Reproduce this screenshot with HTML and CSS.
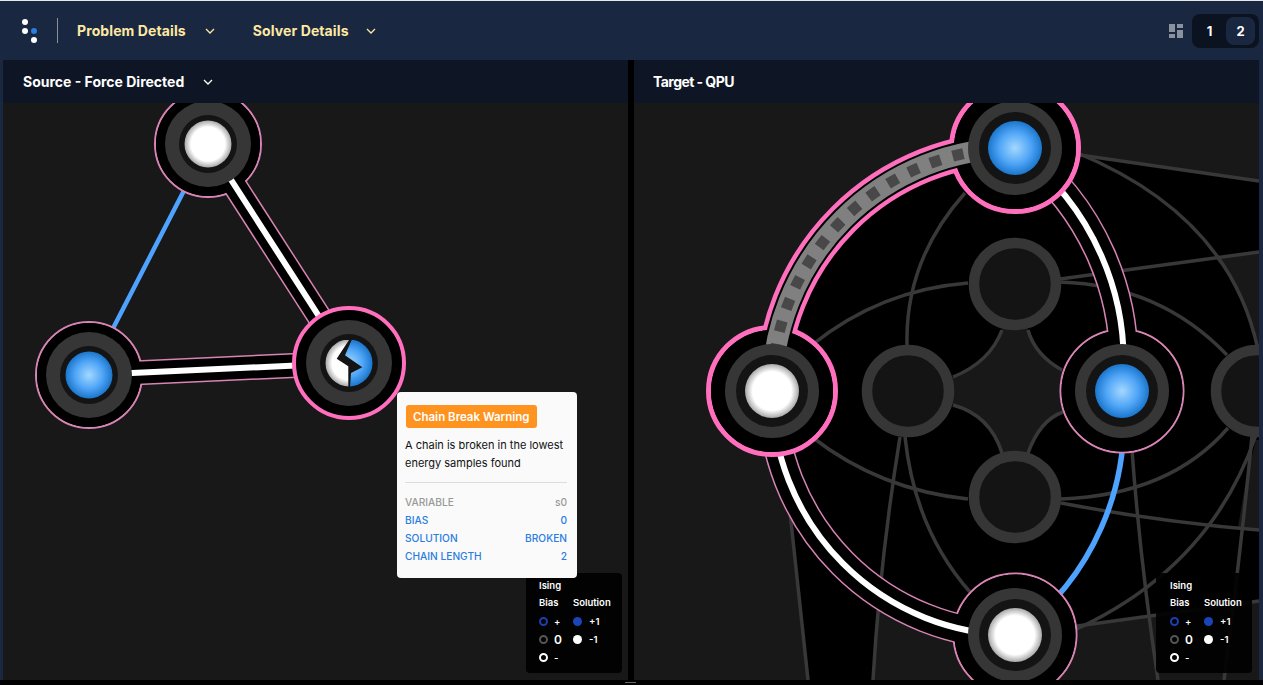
FILE: index.html
```html
<!DOCTYPE html>
<html lang="en">
  <head>
    <meta charset="UTF-8" />
    <meta name="viewport" content="width=device-width, initial-scale=1.0" />
    <title>Problem Inspector</title>
    <link rel="stylesheet" href="styles.css">
  </head>
  <body>
    <header class="topbar">
      <svg class="logo" width="24" height="30" viewBox="0 0 24 30">
        <circle cx="5" cy="6" r="3" fill="#fff" />
        <circle cx="5" cy="15" r="3" fill="#fff" />
        <circle cx="14" cy="15" r="3" fill="#2a7de1" />
        <circle cx="14" cy="24" r="3" fill="#fff" />
      </svg>
      <div class="topbar-sep"></div>
      <div class="menu-item menu-problem">
        <span>Problem Details</span>
        <svg class="chevron" width="10" height="6" viewBox="0 0 10 6"><path d="M1 1l4 4 4-4" /></svg>
      </div>
      <div class="menu-item">
        <span>Solver Details</span>
        <svg class="chevron" width="10" height="6" viewBox="0 0 10 6"><path d="M1 1l4 4 4-4" /></svg>
      </div>
      <svg class="layout-icon" width="14" height="14" viewBox="0 0 14 14">
        <rect x="0" y="0" width="6" height="8" />
        <rect x="8" y="0" width="6" height="4" />
        <rect x="0" y="10" width="6" height="4" />
        <rect x="8" y="6" width="6" height="8" />
      </svg>
      <div class="pager">
        <div class="pager-btn">1</div>
        <div class="pager-btn active">2</div>
      </div>
    </header>

    <main class="panels">
      <section class="panel panel-source">
        <div class="panel-head">
          <span>Source - Force Directed</span>
          <svg class="chevron" width="10" height="6" viewBox="0 0 10 6"><path d="M1 1l4 4 4-4" /></svg>
        </div>
        <div class="canvas">
          <svg class="graph" width="625" height="577" viewBox="3 103 625 577">
            <defs>
              <radialGradient id="blueA"><stop offset="0" stop-color="#a3d8ff" /><stop offset="0.6" stop-color="#4ea4f6" /><stop offset="1" stop-color="#1a76cc" /></radialGradient>
              <radialGradient id="whiteA"><stop offset="0" stop-color="#fff" /><stop offset="0.72" stop-color="#fff" /><stop offset="1" stop-color="#a8a8a8" /></radialGradient>
              <clipPath id="halfWhite"><path d="M349 340 L336.7 358.7 L348.3 366.3 L348.3 388 L320 388 L320 340 Z" /></clipPath>
              <clipPath id="halfBlue"><path d="M351.7 340 L345 355.3 L362.3 367.3 L351 373 L350 388 L380 388 L380 340 Z" /></clipPath>
            </defs>
            <path class="edge-blue edge-w4" d="M208 144 L89 375" />
            <path class="halo-pink halo-w25" d="M208 144 L349 363 M89 375 L349 363" />
            <circle class="ring-thin" cx="208" cy="144" r="53" />
            <circle class="ring-thin" cx="89" cy="375" r="53" />
            <path class="halo-black halo-w22" d="M208 144 L349 363 M89 375 L349 363" />
            <circle class="halo-disc" cx="208" cy="144" r="52" />
            <circle class="halo-disc" cx="89" cy="375" r="52" />
            <path class="edge-white edge-w6" d="M208 144 L349 363 M89 375 L349 363" />
            <circle class="ring-thick" cx="349" cy="363" r="55" />

            <circle class="node-ring" cx="208" cy="144" r="43" />
            <circle class="node-core" cx="208" cy="144" r="29" />
            <circle cx="208" cy="144" r="23.5" fill="url(#whiteA)" />

            <circle class="node-ring" cx="89" cy="375" r="43" />
            <circle class="node-core" cx="89" cy="375" r="29" />
            <circle cx="89" cy="375" r="23.5" fill="url(#blueA)" />

            <circle class="node-ring" cx="349" cy="363" r="43" />
            <circle class="node-core" cx="349" cy="363" r="29" />
            <circle cx="349" cy="363" r="23.5" fill="url(#whiteA)" clip-path="url(#halfWhite)" />
            <circle cx="349" cy="363" r="23.5" fill="url(#blueA)" clip-path="url(#halfBlue)" />
          </svg>
          <div class="legend legend-source">
            <div class="legend-title">Ising</div>
            <div class="legend-cols">
              <div class="legend-col">
                <div class="legend-head">Bias</div>
                <div class="legend-row"><i class="dot ring-blue"></i><b>+</b></div>
                <div class="legend-row"><i class="dot ring-gray"></i><b class="big">0</b></div>
                <div class="legend-row"><i class="dot ring-white"></i><b>-</b></div>
              </div>
              <div class="legend-col">
                <div class="legend-head">Solution</div>
                <div class="legend-row"><i class="dot fill-blue"></i><b>+1</b></div>
                <div class="legend-row"><i class="dot fill-white"></i><b>-1</b></div>
              </div>
            </div>
          </div>
        </div>
      </section>

      <section class="panel panel-target">
        <div class="panel-head"><span class="head-tight">Target - QPU</span></div>
        <div class="canvas">
          <svg class="graph" width="625" height="577" viewBox="634 103 625 577">
            <defs>
              <radialGradient id="blueB"><stop offset="0" stop-color="#a3d8ff" /><stop offset="0.6" stop-color="#4ea4f6" /><stop offset="1" stop-color="#1a76cc" /></radialGradient>
              <radialGradient id="whiteB"><stop offset="0" stop-color="#fff" /><stop offset="0.72" stop-color="#fff" /><stop offset="1" stop-color="#a8a8a8" /></radialGradient>
            </defs>
            <!-- black fill the arcs enclose -->
            <path class="area-black" d="M772 391 A243 243 0 0 1 1015 148 L1080 155 L1259 181 L1259 602 L1077 625 L1015 635 A243 243 0 0 1 880 593 L873 680 L808 680 L786 475 Z" />
            <path class="area-gray" d="M1015 284 L1002 330 Q990 362 953 377 L908 391 L953 405 Q990 415 1002 453 L1015 497 L1028 453 Q1040 420 1063 412 L1122 391 L1062 370 Q1035 355 1028 330 Z" />
            <path class="area-gray" d="M1215 258 Q1248 295 1258 350 L1259 350 L1259 252 Z" />
            <path class="area-gray" d="M1246 480 L1256 440 L1259 440 L1259 530 L1238 527 Z" />

            <path class="line" d="M1060 155 L1080 155 L1259 181" />
            <path class="line" d="M1075 152 Q1230 215 1258 350" />
            <path class="line" d="M1060 279 L1259 252" />
            <path class="line" d="M1060 282 Q1160 285 1227 355" />
            <path class="line" d="M1028 330 Q1035 355 1062 370" />
            <path class="line" d="M1002 330 Q990 362 953 377" />
            <path class="line" d="M953 405 Q990 415 1002 453" />
            <path class="line" d="M1028 453 Q1040 420 1063 412" />
            <path class="line" d="M965 193 Q905 260 907 345" />
            <path class="line" d="M812 345 Q880 290 968 283" />
            <path class="line" d="M812 437 Q880 490 968 499" />
            <path class="line" d="M900 437 Q880 560 873 680" />
            <path class="line" d="M905 437 Q915 530 970 592" />
            <path class="line" d="M786 475 Q792 530 808 680" />
            <path class="line" d="M1061 499 Q1170 495 1228 428" />
            <path class="line" d="M1061 503 Q1160 522 1259 530" />
            <path class="line" d="M1132 450 Q1140 560 1158 680" />
            <path class="line" d="M1252 436 Q1240 560 1224 680" />
            <path class="line" d="M1070 632 Q1210 570 1256 435" />
            <path class="line" d="M1070 627 L1259 601" />

            <path class="edge-blue edge-w5" d="M1122 391 A265 265 0 0 1 1015 635" />

            <!-- thin chains run under the two selected nodes -->
            <path class="halo-pink halo-w30" d="M1015 148 A265 265 0 0 1 1122 391 M772 391 A243 243 0 0 0 1015 635" />
            <circle class="ring-thin" cx="1122" cy="391" r="61.5" />
            <circle class="ring-thin" cx="1015" cy="635" r="61.5" />
            <path class="halo-black halo-w27" d="M1015 148 A265 265 0 0 1 1122 391 M772 391 A243 243 0 0 0 1015 635" />
            <circle class="halo-disc" cx="1122" cy="391" r="60.5" />
            <circle class="halo-disc" cx="1015" cy="635" r="60.5" />
            <path class="edge-white edge-w6" d="M1015 148 A265 265 0 0 1 1122 391 M772 391 A243 243 0 0 0 1015 635" />

            <!-- selected chain -->
            <path class="halo-hot halo-w34" d="M772 391 A243 243 0 0 1 1015 148" />
            <circle class="ring-hot" cx="772" cy="391" r="63.5" />
            <circle class="ring-hot" cx="1015" cy="148" r="63.5" />
            <path class="halo-black halo-w25" d="M772 391 A243 243 0 0 1 1015 148" />
            <circle class="halo-disc" cx="772" cy="391" r="61" />
            <circle class="halo-disc" cx="1015" cy="148" r="61" />
            <path class="edge-broken" d="M772 391 A243 243 0 0 1 1015 148" />
            <path class="edge-dashes" d="M772 391 A243 243 0 0 1 1015 148" />

            <circle class="node-ring" cx="1015" cy="148" r="47" />
            <circle class="node-core" cx="1015" cy="148" r="36" />
            <circle cx="1015" cy="148" r="27" fill="url(#blueB)" />

            <circle class="node-ring" cx="772" cy="391" r="47" />
            <circle class="node-core" cx="772" cy="391" r="36" />
            <circle cx="772" cy="391" r="27" fill="url(#whiteB)" />

            <circle class="node-ring" cx="1122" cy="391" r="47" />
            <circle class="node-core" cx="1122" cy="391" r="36" />
            <circle cx="1122" cy="391" r="27" fill="url(#blueB)" />

            <circle class="node-ring" cx="1015" cy="635" r="47" />
            <circle class="node-core" cx="1015" cy="635" r="36" />
            <circle cx="1015" cy="635" r="27" fill="url(#whiteB)" />

            <circle class="node-empty" cx="1015" cy="284" r="41" />
            <circle class="node-empty" cx="908" cy="391" r="41" />
            <circle class="node-empty" cx="1015" cy="497" r="41" />
            <circle class="node-empty" cx="1257" cy="391" r="41" />
          </svg>
          <div class="legend legend-target">
            <div class="legend-title">Ising</div>
            <div class="legend-cols">
              <div class="legend-col">
                <div class="legend-head">Bias</div>
                <div class="legend-row"><i class="dot ring-blue"></i><b>+</b></div>
                <div class="legend-row"><i class="dot ring-gray"></i><b class="big">0</b></div>
                <div class="legend-row"><i class="dot ring-white"></i><b>-</b></div>
              </div>
              <div class="legend-col">
                <div class="legend-head">Solution</div>
                <div class="legend-row"><i class="dot fill-blue"></i><b>+1</b></div>
                <div class="legend-row"><i class="dot fill-white"></i><b>-1</b></div>
              </div>
            </div>
          </div>
        </div>
      </section>

      <div class="tooltip">
        <div class="badge">Chain Break Warning</div>
        <p class="tooltip-text">A chain is broken in the lowest energy samples found</p>
        <div class="tooltip-rows">
          <div class="tooltip-row muted"><span>VARIABLE</span><span>s0</span></div>
          <div class="tooltip-row"><span>BIAS</span><span>0</span></div>
          <div class="tooltip-row"><span>SOLUTION</span><span>BROKEN</span></div>
          <div class="tooltip-row"><span>CHAIN LENGTH</span><span>2</span></div>
        </div>
      </div>
    </main>
    <div class="bottom-bar"><div class="handle"></div></div>
  </body>
</html>
```

FILE: styles.css
```css
html, body {
  margin: 0;
  height: 100%;
}

body {
  width: 1263px;
  height: 685px;
  overflow: hidden;
  background-color: #1a2740;
  font-family: Inter, "Liberation Sans", sans-serif;
  display: flex;
  flex-direction: column;
  border-top: 1px solid #e8e8e8;
  box-sizing: border-box;
}

/* top bar */
.topbar {
  height: 59px;
  flex: none;
  display: flex;
  align-items: center;
  padding: 0 4px 0 20px;
  box-sizing: border-box;
}

.logo {
  margin-right: 13px;
}

.topbar-sep {
  width: 1px;
  height: 25px;
  background-color: #8a8f99;
  margin-right: 19px;
}

.menu-item {
  display: flex;
  align-items: center;
  color: #fde9a4;
  font-size: 14px;
  font-weight: 700;
  letter-spacing: 0.1px;
  gap: 17px;
}

.menu-problem {
  gap: 19px;
  margin-right: 38px;
}

.chevron {
  fill: none;
  stroke: currentColor;
  stroke-width: 1.3;
}

.layout-icon {
  margin-left: auto;
  margin-right: 9px;
  fill: #8a92a0;
}

.pager {
  display: flex;
  align-items: center;
  justify-content: space-between;
  width: 67px;
  height: 34px;
  margin-top: 1px;
  padding: 3px 4px 3px 3px;
  box-sizing: border-box;
  background-color: #0b1220;
  border-radius: 8px;
}

.pager-btn {
  width: 29px;
  height: 28px;
  line-height: 28px;
  text-align: center;
  color: #fff;
  font-size: 13px;
  font-weight: 700;
  border-radius: 8px;
}

.pager-btn.active {
  background-color: #1a2740;
}

/* panels */
.panels {
  position: relative;
  display: flex;
  height: 620px;
  flex: none;
  padding: 0 4px 0 3px;
  box-sizing: border-box;
}

.panel {
  width: 625px;
  display: flex;
  flex-direction: column;
}

.panel-source {
  margin-right: 6px;
}

.panels::after {
  content: "";
  position: absolute;
  left: 628px;
  top: 0;
  bottom: 0;
  width: 6px;
  background-color: #000;
}

.panel-head {
  height: 43px;
  flex: none;
  display: flex;
  align-items: center;
  gap: 19px;
  padding: 0 20px;
  color: #fff;
  background-color: #0e1524;
  font-size: 14px;
  font-weight: 700;
}

.head-tight {
  margin-left: -1px;
  letter-spacing: -0.55px;
}

.canvas {
  position: relative;
  flex: 1;
  background-color: #181818;
  overflow: hidden;
}

.graph {
  display: block;
}

/* graph drawing */
.area-black { fill: #000; }
.area-gray { fill: #181818; }

.line {
  fill: none;
  stroke: #383838;
  stroke-width: 3.5;
}

.edge-blue, .edge-white, .halo-pink, .halo-hot, .halo-black, .edge-broken, .edge-dashes {
  fill: none;
}

.edge-blue { stroke: #4da3ff; }
.edge-white { stroke: #fff; }
.halo-pink { stroke: #d884b4; }
.halo-hot { stroke: #ff6fbe; }
.halo-black { stroke: #000; }

.edge-w4 { stroke-width: 4.5; }
.edge-w5 { stroke-width: 5.5; }
.edge-w6 { stroke-width: 6; }
.halo-w22 { stroke-width: 22; }
.halo-w25 { stroke-width: 25; }
.halo-w27 { stroke-width: 27; }
.halo-w30 { stroke-width: 30; }
.halo-w34 { stroke-width: 34; }

.edge-broken {
  stroke: #808080;
  stroke-width: 21;
}

.edge-dashes {
  stroke: #484848;
  stroke-width: 11;
  stroke-dasharray: 11 12.5;
  stroke-dashoffset: -13;
}

.ring-thin {
  fill: #000;
  stroke: #d884b4;
  stroke-width: 2;
}

.ring-thick {
  fill: #000;
  stroke: #ff6fbe;
  stroke-width: 4;
}

.ring-hot {
  fill: #000;
  stroke: #ff6fbe;
  stroke-width: 5;
}

.halo-disc { fill: #000; }
.node-ring { fill: #363636; }
.node-core { fill: #141414; }

.node-empty {
  fill: #141414;
  stroke: #363636;
  stroke-width: 10.5;
}

/* legend */
.legend {
  position: absolute;
  bottom: 7px;
  width: 96px;
  height: 100px;
  padding: 6px 13px;
  box-sizing: border-box;
  background-color: rgba(0, 0, 0, 0.9);
  border-radius: 4px;
  color: #fff;
  font-size: 9.5px;
  font-weight: 600;
}

.legend-source { right: 6px; }

.legend-target {
  right: 7px;
  padding-left: 14px;
}

.legend-title {
  line-height: 14px;
  margin-bottom: 1px;
}

.legend-cols {
  display: flex;
}

.legend-col {
  display: flex;
  flex-direction: column;
}

.legend-col:first-child {
  width: 34px;
  margin-right: 0;
  flex: none;
}

.legend-head {
  line-height: 18px;
}

.legend-row {
  display: flex;
  align-items: center;
  height: 18px;
  gap: 6px;
}

.legend-row b {
  font-weight: 600;
}

.legend-row .big {
  font-size: 12px;
}

.dot {
  width: 9px;
  height: 9px;
  border-radius: 50%;
  box-sizing: content-box;
  flex: none;
}

.fill-blue, .fill-white {
  margin-right: 1px;
}

.ring-blue, .ring-gray, .ring-white {
  width: 5px;
  height: 5px;
  border: 2px solid;
  margin-right: 0;
}

.ring-blue { border-color: #1c3fb0; }
.ring-gray { border-color: #555; }
.ring-white { border-color: #fff; }
.fill-blue { background-color: #1a44b8; }
.fill-white { background-color: #fff; }

/* tooltip */
.tooltip {
  position: absolute;
  left: 397px;
  top: 332px;
  width: 180px;
  height: 186px;
  padding: 13px 10px 0 8px;
  box-sizing: border-box;
  background-color: #fafafa;
  border-radius: 4px;
  color: #111;
  font-size: 11px;
  z-index: 2;
}

.badge {
  display: inline-block;
  margin-left: 1px;
  padding: 1px 7px 0;
  height: 23px;
  box-sizing: border-box;
  line-height: 22px;
  background-color: #ff9320;
  border-radius: 3px;
  color: #fff;
  font-size: 11.5px;
  font-weight: 600;
}

.tooltip-text {
  margin: 8px 0 0;
  line-height: 18px;
}

.tooltip-rows {
  margin-top: 10px;
  padding-top: 10px;
  border-top: 1px solid #ddd;
}

.tooltip-row {
  display: flex;
  justify-content: space-between;
  height: 18px;
  line-height: 18px;
  color: #2a7de1;
  font-size: 10.2px;
  font-weight: 500;
}

.tooltip-row.muted {
  color: #999;
}

.bottom-bar {
  flex: 1;
  background-color: #000;
  position: relative;
}

.handle {
  position: absolute;
  left: 625px;
  top: 2px;
  width: 11px;
  height: 1px;
  background-color: #666;
}
```
